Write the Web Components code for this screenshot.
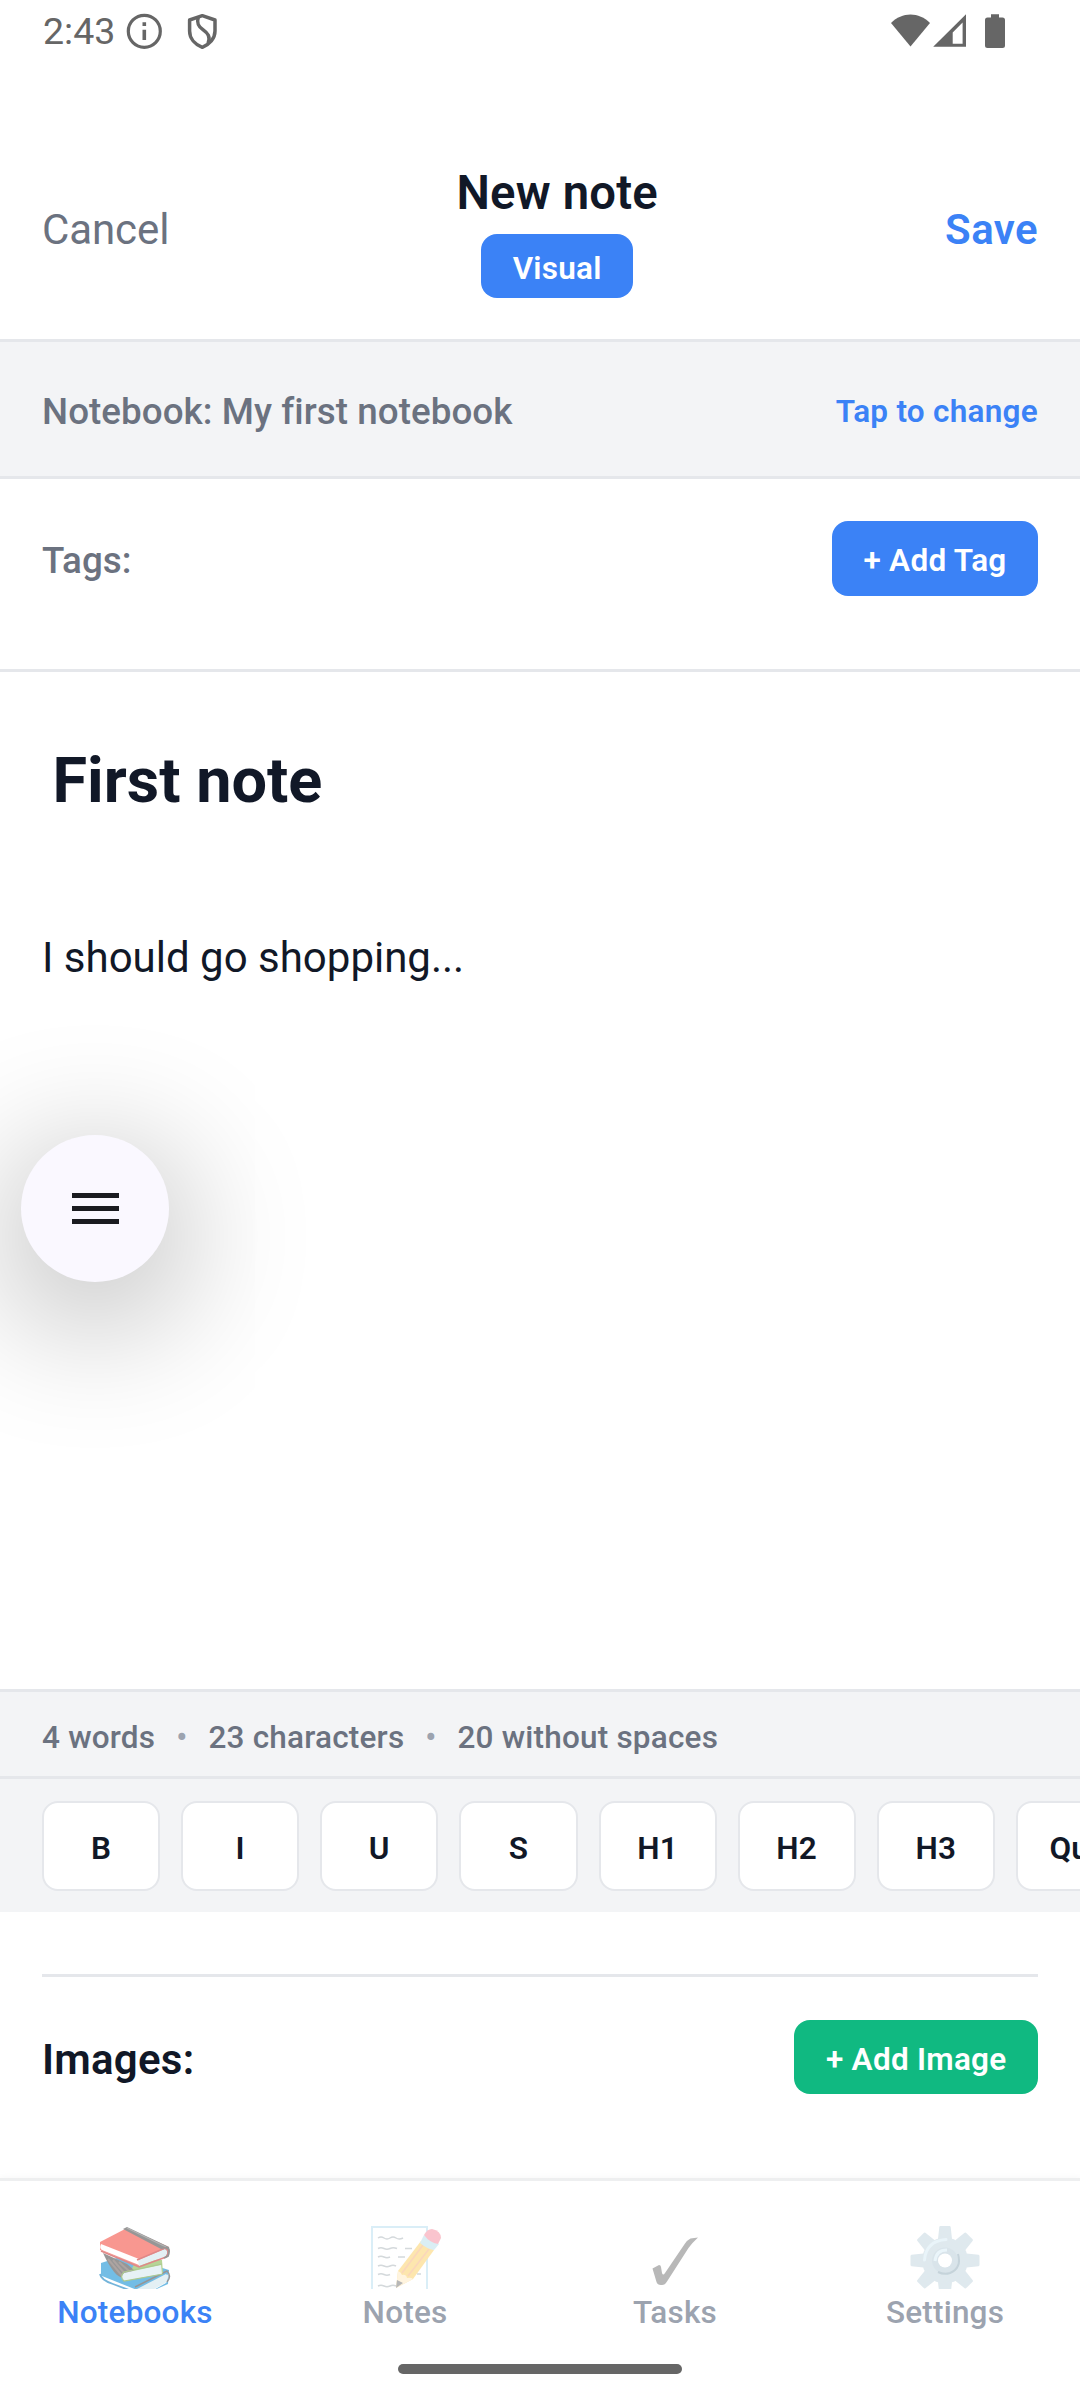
<!DOCTYPE html>
<html lang="en">
<head>
<meta charset="utf-8">
<title>New note</title>
<style>
  html, body { margin: 0; background: #fff; }
  body { width: 1080px; height: 2400px; overflow: hidden; font-family: Roboto, "Liberation Sans", sans-serif; color: #111827; }
</style>
</head>
<body>
<note-screen></note-screen>
<script>
const define = (name, html) => {
  const tpl = document.createElement('template');
  tpl.innerHTML = '<style>:host{display:block;box-sizing:border-box}*{box-sizing:border-box}</style>' + html;
  customElements.define(name, class extends HTMLElement {
    constructor() {
      super();
      this.attachShadow({ mode: 'open' }).append(tpl.content.cloneNode(true));
    }
  });
};

/* Single line of text with Android style font padding above the glyphs */
define('text-line', `
<style>
  :host { font-size: var(--size, 36.75px); line-height: 1.2; padding-top: calc(.1em + 2px); white-space: nowrap; letter-spacing: var(--track, .06px); }
</style><slot></slot>`);

define('status-bar', `
<style>
  :host { display: flex; height: 63px; padding: 0 75px 0 42px; justify-content: space-between; color: #666; }
  div { display: flex; align-items: flex-start; }
  .time { font-size: 37.5px; line-height: 43px; padding: 10px 0 0 1px; width: 83px; }
  svg { display: block; margin-top: 12px; }
</style>
<div>
  <span class="time">2:43</span>
  <svg width="39" height="39" viewBox="0 0 39 39"><circle cx="19.3" cy="19.3" r="16" fill="none" stroke="#666" stroke-width="3.2"/><path d="M17.5 10.2h3.6v3.7h-3.6zM17.5 17.7h3.6v10.4h-3.6z" fill="#666"/></svg>
  <svg width="35" height="39" viewBox="0 0 35 39" style="margin-left:21px"><g fill="none" stroke="#666" stroke-width="3.5" stroke-linejoin="round"><path d="M17.3 3.7 30 8v11c0 7.5-5.5 13.500-12.700 16.300C10 32.500 4.600 26.500 4.600 19V8z"/><path d="M13.200 5.200c-1.600 6 0 9 4.400 12.200 5.400 3.900 8 7 5.500 14"/></g></svg>
</div>
<div>
  <svg width="39" height="39" viewBox="0 0 39 39"><path d="M0 11C11-.400 28-.400 39 11L19.500 34.500z" fill="#666"/></svg>
  <svg width="33" height="39" viewBox="0 0 33 39" style="margin-left:3.500px"><path fill-rule="evenodd" d="M33 2.300V34.700H.200zM29.600 10.500 19.700 20.500V31.700h9.900z" fill="#666"/></svg>
  <svg width="20" height="39" viewBox="0 0 20 39" style="margin-left:19px"><path d="M6 2.200h8v3.300h3.500Q20 5.500 20 8v25.500q0 2.500-2.500 2.500h-15Q0 36 0 33.500V8q0-2.500 2.500-2.500H6z" fill="#666"/></svg>
</div>`);

define('pill-button', `
<style>
  :host { display: inline-flex; align-items: center; justify-content: center; height: var(--h, 75px); padding: 0 31.5px;
    border-radius: 16px; background: var(--bg, #3b82f6); color: #fff; font-weight: 560; --size: 31.5px; --track: .26px; }
</style><text-line><slot></slot></text-line>`);

define('note-header', `
<style>
  :host { display: flex; align-items: center; justify-content: space-between; height: 279px; padding: 57px 42px 0; border-bottom: 3px solid #e5e7eb; }
  .cancel { --size: 42px; --track: -.1px; color: #6b7280; padding-bottom: 5px; }
  .save { --size: 42px; --track: .4px; color: #3b82f6; font-weight: 560; padding-bottom: 5px; }
  .mid { display: flex; flex-direction: column; align-items: center; gap: 9px; padding-top: 1px; }
  .title { --size: 47.25px; --track: .2px; font-weight: 560; line-height: 57px; padding-top: 3px; padding-bottom: 3px; }
</style>
<text-line class="cancel">Cancel</text-line>
<div class="mid"><text-line class="title">New note</text-line><pill-button style="--h:64px">Visual</pill-button></div>
<text-line class="save">Save</text-line>`);

define('notebook-row', `
<style>
  :host { display: flex; align-items: center; justify-content: space-between; height: 137px; padding: 0 42px; background: #f3f4f6; border-bottom: 3px solid #e5e7eb; font-weight: 500; color: #6b7280; }
  .act { --size: 31.5px; --track: .26px; color: #3b82f6; font-weight: 560; }
</style>
<text-line>Notebook: My first notebook</text-line><text-line class="act">Tap to change</text-line>`);

define('tags-row', `
<style>
  :host { display: flex; align-items: center; justify-content: space-between; height: 193px; padding: 0 42px 32px; border-bottom: 3px solid #e5e7eb; font-weight: 500; color: #6b7280; }
</style>
<text-line>Tags:</text-line><pill-button>+ Add Tag</pill-button>`);

define('menu-fab', `
<style>
  :host { display: flex; flex-direction: column; align-items: center; justify-content: center; gap: 7.700px; width: 148px; height: 147px; border-radius: 50%; background: #faf8ff; box-shadow: 0 28px 140px 6px rgba(0,0,0,.33); }
  i { width: 47px; height: 5.500px; background: #1a1b20; }
</style><i></i><i></i><i></i>`);

define('note-editor', `
<style>
  :host { display: flex; flex-direction: column; flex: 1; position: relative; padding: 67px 42px 0; overflow: hidden; }
  .title { font-size: 63px; font-weight: 700; line-height: 84px; padding-left: 10.5px; }
  .body { font-size: 42px; line-height: 63px; margin-top: 103px; }
  menu-fab { position: absolute; left: 21px; top: 463px; }
</style>
<div class="title"><slot name="title"></slot></div>
<div class="body"><slot></slot></div>
<menu-fab></menu-fab>`);

define('stats-bar', `
<style>
  :host { display: flex; align-items: center; height: 90px; padding: 3px 42px 0; gap: 21px; background: #f3f4f6; border: solid #e5e7eb; border-width: 3px 0; font-weight: 500; color: #6b7280; --size: 31.5px; --track: .2px; }
  .dot { color: #9ca3af; }
</style>
<text-line>4 words</text-line><text-line class="dot">•</text-line><text-line>23 characters</text-line><text-line class="dot">•</text-line><text-line>20 without spaces</text-line>`);

define('tool-key', `
<style>
  :host { display: flex; align-items: center; justify-content: center; flex: none; min-width: 118.125px; height: 90px; padding: 0 31.5px; background: #fff; border: 2.625px solid #e5e7eb; border-radius: 16px; font-weight: 560; --size: 31.5px; --track: .2px; }
</style><text-line><slot></slot></text-line>`);

define('format-toolbar', `
<style>
  :host { display: flex; gap: 21px; height: 133px; padding: 22px 0 0 42px; background: #f3f4f6; overflow: hidden; }
</style>
<tool-key>B</tool-key><tool-key>I</tool-key><tool-key>U</tool-key><tool-key>S</tool-key><tool-key>H1</tool-key><tool-key>H2</tool-key><tool-key>H3</tool-key><tool-key>Quote</tool-key>`);

define('images-section', `
<style>
  :host { height: 266px; padding: 62px 42px 0; }
  div { display: flex; align-items: center; justify-content: space-between; border-top: 3px solid #e5e7eb; padding-top: 43px; font-weight: 560; }
  text-line { --size: 42px; --track: .25px; }
</style>
<div><text-line>Images:</text-line><pill-button style="--bg:#10b981;--h:74px">+ Add Image</pill-button></div>`);

define('tab-item', `
<style>
  :host { display: flex; flex-direction: column; align-items: center; flex: 1; color: #9ca3af; font-weight: 500; }
  :host([active]) { color: #3b82f6; }
  .icon { width: 72px; height: 63px; overflow: hidden; }
  text-line { --size: 31.5px; --track: .2px; }
</style><div class="icon"><slot name="icon"></slot></div><text-line><slot></slot></text-line>`);

define('tab-bar', `
<style>
  :host { height: 222px; border-top: 3px solid #eeeff0; background: #fff; box-shadow: 0 -2px 5px rgba(0,0,0,.025); padding-top: 45px; position: relative; }
  nav { display: flex; height: 138px; }
  svg { display: block; }
  .home { width: 284px; height: 10px; margin: 0 auto; border-radius: 5px; background: #666; }
</style>
<nav>
  <tab-item active>
    <svg slot="icon" width="72" height="72" viewBox="0 0 72 72" opacity=".55">
      <path d="M2 37 24 30 70 44 69 58 44 69 2 52z" fill="#0288d1"/>
      <path d="M3 50 38 64 68 50 70 46 67 57 44 70 2 53z" fill="#fff"/>
      <path d="M38 63 67 48Q70 49 68 56L44 69z" fill="#cfe4ec"/>
      <path d="M36 61 68 45Q73 50 68 56" fill="none" stroke="#424242" stroke-width="1.500"/>
      <path d="M1 48Q2 54 14 58L38 67" fill="none" stroke="#0277bd" stroke-width="1.800"/>
      <path d="M38 32 63 34 64 47 27 55z" fill="#7cb342"/>
      <path d="M4 27 28 38 35 44 24 52C18 51 12 44 4 27z" fill="#424242"/>
      <path d="M9 33 24 51M14 34 27 49M20 36 31 46" stroke="#6b5a55" stroke-width="2"/>
      <path d="M25 47 62 39 63 48 25 55Q21 51 25 47z" fill="#d5e9ef"/>
      <path d="M63 38 25 46Q20 51 25 55L64 48" fill="none" stroke="#689f38" stroke-width="1.200"/>
      <path d="M1 16 28 2 70 21 70 27 39 40 1 24z" fill="#f44336"/>
      <path d="M24 3 28 1 70 21Q72 26 67 31L62 23z" fill="#424242"/>
      <path d="M28 2 67 21" stroke="#777" stroke-width="1.200"/>
      <path d="M2 18 40 33 40 39 3 24Q0 22 2 18z" fill="#fff"/>
      <path d="M39 34 66 23Q70 25 67 30L40 40z" fill="#cfe4ec"/>
      <path d="M38 34 66 22Q72 25 67 31L40 41 2 25" fill="none" stroke="#c62828" stroke-width="1.500"/>
      <path d="M62 22Q73 20 69 30L65 32" fill="none" stroke="#424242" stroke-width="1.800"/>
    </svg>
    Notebooks
  </tab-item>
  <tab-item>
    <svg slot="icon" width="72" height="72" viewBox="0 0 72 72" opacity=".42">
      <path d="M3 1h55v70H3z" fill="#fff" stroke="#a8d8ee" stroke-width="2"/>
      <path d="M9 12q3-2 6 0t6 0 6 0 7 0M9 22.500q3-1.500 6 0t6 0 7 0M36 22.500h7M9 31q3-1.500 6 0t6 0M29 31h7M9 40q3-1.500 6 0t6 0 6 0M9 48.500q3-1.500 6 0t6 0M48 48h4M9 60q3-1.500 6 0t6 0 6 0" fill="none" stroke="#9aa5ac" stroke-width="1.400"/>
      <path d="M27 62 29 45 52 15 65 24 44 53z" fill="#fbc53f"/>
      <path d="M33 47 54 19M39 50 60 23" stroke="#f5a05e" stroke-width="1.600"/>
      <path d="M27 62 29 45Q32 46 33 49 37 48 38 52 42 51 44 53z" fill="#ffe6b5"/>
      <path d="M27 62 28 54 34 57z" fill="#555"/>
      <path d="M51 17 55 9 70 18 65 24q-7-1-14-7z" fill="#a9d7e6"/>
      <path d="M55 9Q58 3 63 3q9 2 9 9l-3 6q-8-1-14-9z" fill="#f4758b"/>
    </svg>
    Notes
  </tab-item>
  <tab-item>
    <svg slot="icon" width="72" height="72" viewBox="0 0 72 72">
      <path d="M13.500 42.500 20 39q1.800 0 2 2l1 6q1 3 3 0L46 17.500q2.500-3.500 5.500-5L59 11.500Q53 17 49.500 22L28 55.500q-2 3.500-5 3.500-4.500.5-5.500-3z" fill="#b8b8b8"/>
    </svg>
    Tasks
  </tab-item>
  <tab-item>
    <svg slot="icon" width="72" height="72" viewBox="0 0 72 72">
      <g fill="#dfe9ee">
        <circle cx="36" cy="34.500" r="23"/>
        <g id="t"><path d="M31.500 0h9q1 0 1.200 1l1.300 12H29l1.300-12q.2-1 1.200-1zM31.500 69h9q1 0 1.200-1L43 56H29l1.300 12q.2 1 1.200 1z"/></g>
        <use href="#t" transform="rotate(45 36 34.500)"/><use href="#t" transform="rotate(90 36 34.500)"/><use href="#t" transform="rotate(135 36 34.500)"/>
      </g>
      <path d="M15.500 34Q17 15 37 13.500" fill="none" stroke="#e9f4f9" stroke-width="3" stroke-linecap="round"/>
      <circle cx="36" cy="34.500" r="13" fill="#d9e4ea"/>
      <path d="M49 28Q53 42 41 47 35 49 29 46" fill="none" stroke="#c5d3da" stroke-width="2"/>
      <path d="M26 35Q27 24 38 24" fill="none" stroke="#eaf5fa" stroke-width="3"/>
      <circle cx="36" cy="34.500" r="7" fill="#fff"/>
    </svg>
    Settings
  </tab-item>
</nav>
<div class="home"></div>`);

define('note-screen', `
<style>
  :host { display: flex; flex-direction: column; width: 1080px; height: 2400px; background: #fff; }
  status-bar, note-header, notebook-row, tags-row, stats-bar, format-toolbar, images-section, tab-bar { flex: none; }
</style>
<status-bar></status-bar>
<note-header></note-header>
<notebook-row></notebook-row>
<tags-row></tags-row>
<note-editor><span slot="title">First note</span>I should go shopping...</note-editor>
<stats-bar></stats-bar>
<format-toolbar></format-toolbar>
<images-section></images-section>
<tab-bar></tab-bar>`);
</script>
</body>
</html>
